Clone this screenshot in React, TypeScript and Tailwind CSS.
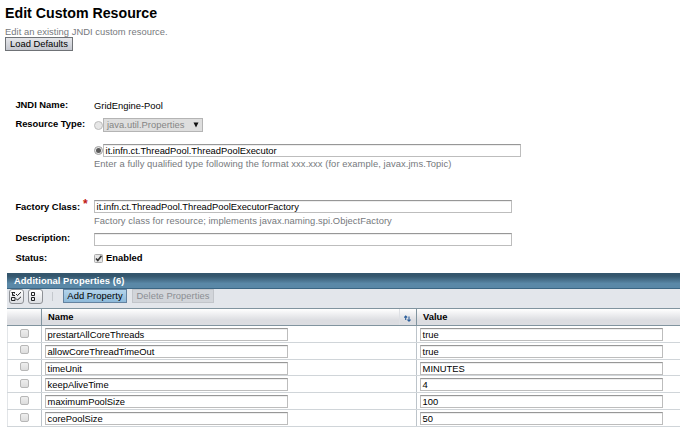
import type { ReactNode } from "react";

const properties = [
  { name: "prestartAllCoreThreads", value: "true", height: "h-[17px]", boxTop: "pt-[3px]" },
  { name: "allowCoreThreadTimeOut", value: "true", height: "h-[17px]", boxTop: "pt-[2px]" },
  { name: "timeUnit", value: "MINUTES", height: "h-[16px]", boxTop: "pt-[2px]" },
  { name: "keepAliveTime", value: "4", height: "h-[17px]", boxTop: "pt-[3px]" },
  { name: "maximumPoolSize", value: "100", height: "h-[17px]", boxTop: "pt-[3px]" },
  { name: "corePoolSize", value: "50", height: "h-[17px]", boxTop: "pt-[3px]" },
];

function Field({ text = "", width }: { text?: string; width: string }) {
  return (
    <div
      className={`${width} h-[13px] shrink-0 border border-[#bdbdbd] border-t-[#979797] bg-white pl-[1.6px] leading-[12px] tracking-[-0.01px] text-black shadow-[inset_0_1px_0_#eeeeee]`}
    >
      {text}
    </div>
  );
}

function Label({ children }: { children: ReactNode }) {
  return <div className="w-[79px] shrink-0 pl-[0.4px] font-bold leading-[13px] text-black">{children}</div>;
}

function Radio({ checked = false }: { checked?: boolean }) {
  return (
    <span
      className={`flex size-[9px] shrink-0 items-center justify-center rounded-full border bg-[#e6e6e6] ${
        checked ? "border-[#a0a0a0]" : "border-[#bcbcbc]"
      }`}
    >
      {checked && <span className="size-[5px] rounded-full bg-[#5a5a5a]" />}
    </span>
  );
}

function ToolIcon({ checked = false }: { checked?: boolean }) {
  return (
    <span className="flex h-[15px] w-[15px] items-center justify-center rounded-[3px] border border-[#8e9196] bg-gradient-to-b from-white to-[#dcdee3]">
      <svg width="13" height="13" viewBox="0 0 13 13" fill="none" stroke="#202225" strokeWidth="1">
        {checked ? (
          <>
            <path d="M1.5 2.5H5M2.5 2.5v3H5M1.5 7.5H5v3H1.5zM3.5 4.5l1-1" />
            <path d="M6 4l1.5 1.5L11 2.2M6 8.5L7.5 10 11 6.8" />
          </>
        ) : (
          <path d="M2.5 2.5h3v3h-3zM2.5 7.5h3v3h-3z" />
        )}
      </svg>
    </span>
  );
}

export default function App() {
  return (
    <div className="h-[439px] w-[680px] overflow-hidden whitespace-nowrap bg-white font-['Liberation_Sans',Arial,sans-serif] text-[9.4px] text-black">
      <header className="h-[98px] pl-[5px] pt-[5px]">
        <h1 className="h-[20px] text-[14.2px] font-bold leading-[17px]">Edit Custom Resource</h1>
        <p className="h-[12px] leading-[13px] tracking-[0.03px] text-[#76797d]">Edit an existing JNDI custom resource.</p>
        <button className="flex h-[14px] w-[68px] items-center justify-center border border-[#6f7276] bg-gradient-to-b from-[#e6e7eb] to-[#c5c8d0] leading-[12px]">
          Load Defaults
        </button>
      </header>

      <section className="h-[175px] pl-[15px]">
        <div className="flex h-[20px]">
          <Label>JNDI Name:</Label>
          <span className="leading-[15px]">GridEngine-Pool</span>
        </div>
        <div className="flex h-[26px]">
          <div className="-mt-[1px]">
            <Label>Resource Type:</Label>
          </div>
          <div className="flex h-[14px] items-center">
            <Radio />
            <div className="flex h-[14px] w-[100px] items-center justify-between border border-[#b4b4b4] bg-[#dedede] pl-[3px] pr-[3px] leading-[12px] tracking-[0.02px] text-[#858585]">
              java.util.Properties
              <svg width="6" height="6" viewBox="0 0 6 6" fill="#111">
                <path d="M.5 .5h5L3 5.5z" />
              </svg>
            </div>
          </div>
        </div>
        <div className="flex h-[56px] flex-col pl-[79px]">
          <div className="flex h-[13px] items-center">
            <Radio checked />
            <Field width="w-[418px]" text="it.infn.ct.ThreadPool.ThreadPoolExecutor" />
          </div>
          <p className="leading-[14px] tracking-[0.07px] text-[#76797d]">
            Enter a fully qualified type following the format xxx.xxx (for example, javax.jms.Topic)
          </p>
        </div>
        <div className="flex h-[33px]">
          <Label>
            <span className="flex">
              Factory Class:
              <span className="-mt-[2px] ml-[3px] text-[12px] text-[#c01818]">*</span>
            </span>
          </Label>
          <div>
            <Field width="w-[418px]" text="it.infn.ct.ThreadPool.ThreadPoolExecutorFactory" />
            <p className="leading-[15px] tracking-[0.05px] text-[#76797d]">
              Factory class for resource; implements javax.naming.spi.ObjectFactory
            </p>
          </div>
        </div>
        <div className="flex h-[19px]">
          <div className="-mt-[2px]">
            <Label>Description:</Label>
          </div>
          <Field width="w-[418px]" />
        </div>
        <div className="flex h-[13px] items-center">
          <div className="-mt-[2px]">
            <Label>Status:</Label>
          </div>
          <svg width="9" height="9" viewBox="0 0 9 9">
            <rect x=".5" y=".5" width="8" height="8" rx="1" fill="#e6e6e6" stroke="#aaa" />
            <path d="M2 4.5l1.8 2L7.5 1.7" fill="none" stroke="#333" strokeWidth="1.6" />
          </svg>
          <b className="ml-[3px]">Enabled</b>
        </div>
      </section>

      <section className="ml-[7px]">
        <h2 className="h-[16px] border-b border-[#3a6583] bg-gradient-to-b from-[#34566d] from-20% to-[#5a88a7] to-70% pl-[7px] font-bold leading-[16px] tracking-[0.06px] text-white">
          Additional Properties (6)
        </h2>
        <div className="flex h-[19px] bg-[#e3e6eb] pl-[2px]">
          <ToolIcon checked />
          <span className="ml-[4px]">
            <ToolIcon />
          </span>
          <span className="ml-[9px] mt-[3px] h-[9px] w-px bg-[#c4c8cd]" />
          <button className="ml-[10px] flex h-[14px] w-[64px] items-center justify-center border border-[#6583a0] bg-gradient-to-b from-[#b4d4eb] to-[#8db9d9] leading-[12px] tracking-[0.05px]">
            Add Property
          </button>
          <button className="ml-[5px] flex h-[14px] w-[82px] items-center justify-center border border-[#c2c5ca] bg-[#d2d5da] leading-[12px] tracking-[0.03px] text-[#8b8e93]">
            Delete Properties
          </button>
        </div>
        <div className="flex h-[18px] border-y border-[#81949f] bg-gradient-to-b from-white to-[#dcdde1] to-70% font-bold leading-[16px]">
          <div className="w-[35px] border-r border-[#81949f]" />
          <div className="flex w-[375px] border-r border-[#81949f] pl-[6px]">
            Name
            <span className="ml-auto flex w-[17px] border-l border-[#dfe1e5] pl-[4px] pt-[6px]">
              <svg width="7" height="7" viewBox="0 0 7 7" fill="none" stroke="#2e609c" strokeWidth="1.1">
                <path d="M1.7 5V1M.2 2.5L1.7 1l1.5 1.5M5 1.5v4.7M3.4 4.7L5 6.2l1.6-1.5" />
              </svg>
            </span>
          </div>
          <div className="pl-[6px]">Value</div>
        </div>
        {properties.map((property) => (
          <div key={property.name} className={`${property.height} flex border-b border-[#d0d5d9]`}>
            <div className={`w-[35px] border-x border-l-[#e2e5e8] border-r-[#bdc4ca] pl-[12px] ${property.boxTop}`}>
              <div className="size-[9px] rounded-[2px] border border-[#b7b7b7] bg-gradient-to-b from-[#eeeeee] to-[#dddddd]" />
            </div>
            <div className="w-[375px] border-r border-[#bdc4ca] pl-[3px] pt-[2px]">
              <Field width="w-[243px]" text={property.name} />
            </div>
            <div className="pl-[3px] pt-[2px]">
              <Field width="w-[243px]" text={property.value} />
            </div>
          </div>
        ))}
      </section>
    </div>
  );
}
